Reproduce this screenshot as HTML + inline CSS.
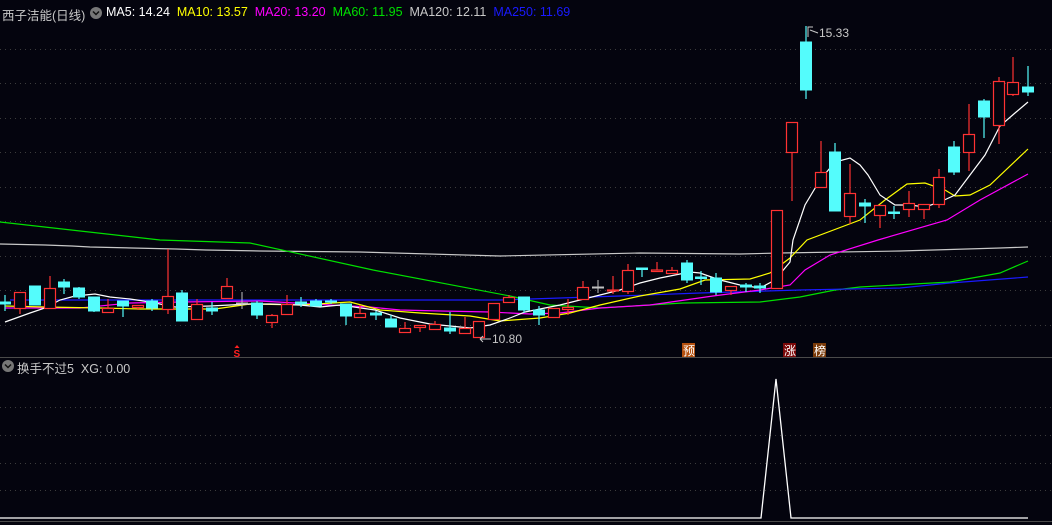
<!DOCTYPE html>
<html><head><meta charset="utf-8"><style>
html,body{margin:0;padding:0;background:#04040e;}
body{width:1052px;height:525px;overflow:hidden;position:relative;font-family:"Liberation Sans","Noto Sans CJK SC",sans-serif;}
.t{position:absolute;font-size:12.5px;white-space:nowrap;}
svg{position:absolute;left:0;top:0}
.r line,.r rect{stroke:#ff3232;stroke-width:1.2}
.r rect{fill:#04040e}
.c line{stroke:#54fcfc;stroke-width:1.2}
.c rect{fill:#54fcfc;stroke:#54fcfc;stroke-width:1}
.g line,.g rect{stroke:#c0c0c0;fill:#c0c0c0}
.ma{fill:none;stroke-width:1.2}
.grid{stroke:#3c3c3c;stroke-dasharray:1 4;stroke-width:1}
</style></head><body>
<svg width="1052" height="525" xmlns="http://www.w3.org/2000/svg">
<g class="grid">
<line x1="0" y1="49.5" x2="1052" y2="49.5"/><line x1="0" y1="83.5" x2="1052" y2="83.5"/><line x1="0" y1="118.5" x2="1052" y2="118.5"/><line x1="0" y1="152.5" x2="1052" y2="152.5"/><line x1="0" y1="187.5" x2="1052" y2="187.5"/><line x1="0" y1="221.5" x2="1052" y2="221.5"/><line x1="0" y1="256.5" x2="1052" y2="256.5"/><line x1="0" y1="290.5" x2="1052" y2="290.5"/><line x1="0" y1="325.5" x2="1052" y2="325.5"/>
<line x1="0" y1="407.5" x2="1052" y2="407.5"/><line x1="0" y1="435.5" x2="1052" y2="435.5"/><line x1="0" y1="463.5" x2="1052" y2="463.5"/><line x1="0" y1="490.5" x2="1052" y2="490.5"/>
</g>
<line x1="0" y1="357.5" x2="1052" y2="357.5" stroke="#4a4a4a"/>
<line x1="0" y1="521.5" x2="1052" y2="521.5" stroke="#4a4a4a"/>
<!-- MA lines -->
<polyline class="ma" stroke="#c8c8c8" points="0,244 45,245 72,246 90,247 132,248 176,249 206,250 260,251 360,252 500,256 640,253 740,254 780,253 900,251 1000,248 1028,247"/>
<polyline class="ma" stroke="#00e000" points="0,222 160,240 250,243 373,270 510,296 550,305 600,308 683,303 760,302 800,297 835,290 860,287 950,282 1000,273 1028,261"/>
<polyline class="ma" stroke="#1a1aff" points="10,300 500,300 620,296 700,293 800,290 900,288 950,283 1028,277"/>
<polyline class="ma" stroke="#ff00ff" points="5,308 80,308 130,303 180,302 260,301 330,305 370,307 400,310 440,311 490,312 530,314 560,313 600,308 650,305 713,296 760,290 790,285 805,270 830,255 878,240 947,220 980,200 1028,174"/>
<polyline class="ma" stroke="#ffff00" points="5,306 45,307 100,308 140,309 215,309 250,304 300,305 350,302 380,310 420,313 470,316 500,321 540,318 570,313 600,305 640,296 680,289 705,280 750,279 770,273 790,258 807,240 860,220 885,200 907,184 925,183 945,190 955,196 970,195 990,185 1028,149"/>
<polyline class="ma" stroke="#ffffff" points="5,322 30,313 45,308 60,300 75,296 95,294 110,297 130,299 150,302 175,307 210,306 250,304 270,304 300,305 320,307 340,305 375,310 400,318 430,324 470,328 490,325 510,318 525,312 560,305 600,295 620,290 640,283 660,278 680,274 690,272 700,273 720,280 740,285 760,288 775,280 790,262 793,240 805,205 820,180 835,162 850,158 860,165 868,175 880,195 895,205 910,205 925,207 940,202 955,195 970,175 985,155 1000,126 1015,113 1028,102"/>
<!-- candles -->
<g class="c"><line x1="5" y1="295" x2="5" y2="311"/><rect x="-0.5" y="302" width="11" height="2"/></g>
<g class="r"><line x1="20" y1="292" x2="20" y2="314"/><rect x="14.5" y="292.5" width="11" height="16"/></g>
<g class="c"><line x1="35" y1="286" x2="35" y2="305"/><rect x="29.5" y="286" width="11" height="19"/></g>
<g class="r"><line x1="50" y1="276" x2="50" y2="308"/><rect x="44.5" y="288.5" width="11" height="20"/></g>
<g class="c"><line x1="64" y1="279" x2="64" y2="294"/><rect x="58.5" y="282" width="11" height="5"/></g>
<g class="c"><line x1="79" y1="287" x2="79" y2="299"/><rect x="73.5" y="288" width="11" height="9"/></g>
<g class="c"><line x1="94" y1="297" x2="94" y2="312"/><rect x="88.5" y="297" width="11" height="14"/></g>
<g class="r"><line x1="108" y1="299" x2="108" y2="312"/><rect x="102.5" y="308.5" width="11" height="4"/></g>
<g class="c"><line x1="123" y1="301" x2="123" y2="317"/><rect x="117.5" y="301" width="11" height="5"/></g>
<g class="r"><line x1="138" y1="305" x2="138" y2="310"/><rect x="132.5" y="305.5" width="11" height="2"/></g>
<g class="c"><line x1="152" y1="299" x2="152" y2="311"/><rect x="146.5" y="301" width="11" height="7"/></g>
<g class="r"><line x1="168" y1="249" x2="168" y2="314"/><rect x="162.5" y="296.5" width="11" height="13"/></g>
<g class="c"><line x1="182" y1="290" x2="182" y2="321"/><rect x="176.5" y="293" width="11" height="28"/></g>
<g class="r"><line x1="197" y1="299" x2="197" y2="319"/><rect x="191.5" y="304.5" width="11" height="15"/></g>
<g class="c"><line x1="212" y1="302" x2="212" y2="315"/><rect x="206.5" y="308" width="11" height="3"/></g>
<g class="r"><line x1="227" y1="278" x2="227" y2="298"/><rect x="221.5" y="286.5" width="11" height="12"/></g>
<g class="g"><line x1="242" y1="292" x2="242" y2="309"/><rect x="236.5" y="303" width="11" height="1"/></g>
<g class="c"><line x1="257" y1="301" x2="257" y2="319"/><rect x="251.5" y="303" width="11" height="12"/></g>
<g class="r"><line x1="272" y1="314" x2="272" y2="328"/><rect x="266.5" y="315.5" width="11" height="7"/></g>
<g class="r"><line x1="287" y1="295" x2="287" y2="314"/><rect x="281.5" y="304.5" width="11" height="10"/></g>
<g class="c"><line x1="301" y1="297" x2="301" y2="307"/><rect x="295.5" y="302" width="11" height="2"/></g>
<g class="c"><line x1="316" y1="299" x2="316" y2="306"/><rect x="310.5" y="301" width="11" height="5"/></g>
<g class="c"><line x1="331" y1="299" x2="331" y2="304"/><rect x="325.5" y="301" width="11" height="1"/></g>
<g class="c"><line x1="346" y1="304" x2="346" y2="325"/><rect x="340.5" y="304" width="11" height="12"/></g>
<g class="r"><line x1="360" y1="305" x2="360" y2="317"/><rect x="354.5" y="313.5" width="11" height="4"/></g>
<g class="c"><line x1="376" y1="311" x2="376" y2="320"/><rect x="370.5" y="313" width="11" height="2"/></g>
<g class="c"><line x1="391" y1="315" x2="391" y2="327"/><rect x="385.5" y="319" width="11" height="8"/></g>
<g class="r"><line x1="405" y1="322" x2="405" y2="332"/><rect x="399.5" y="328.5" width="11" height="4"/></g>
<g class="r"><line x1="420" y1="325" x2="420" y2="332"/><rect x="414.5" y="325.5" width="11" height="2"/></g>
<g class="r"><line x1="435" y1="321" x2="435" y2="329"/><rect x="429.5" y="324.5" width="11" height="5"/></g>
<g class="c"><line x1="450" y1="312" x2="450" y2="334"/><rect x="444.5" y="328" width="11" height="3"/></g>
<g class="r"><line x1="465" y1="317" x2="465" y2="333"/><rect x="459.5" y="328.5" width="11" height="5"/></g>
<g class="r"><line x1="479" y1="321" x2="479" y2="337"/><rect x="473.5" y="321.5" width="11" height="16"/></g>
<g class="r"><line x1="494" y1="303" x2="494" y2="319"/><rect x="488.5" y="303.5" width="11" height="16"/></g>
<g class="r"><line x1="509" y1="295" x2="509" y2="303"/><rect x="503.5" y="297.5" width="11" height="5"/></g>
<g class="c"><line x1="524" y1="297" x2="524" y2="313"/><rect x="518.5" y="297" width="11" height="13"/></g>
<g class="c"><line x1="539" y1="306" x2="539" y2="325"/><rect x="533.5" y="310" width="11" height="5"/></g>
<g class="r"><line x1="554" y1="308" x2="554" y2="317"/><rect x="548.5" y="308.5" width="11" height="9"/></g>
<g class="r"><line x1="568" y1="299" x2="568" y2="315"/><rect x="562.5" y="307.5" width="11" height="2"/></g>
<g class="r"><line x1="583" y1="281" x2="583" y2="299"/><rect x="577.5" y="287.5" width="11" height="12"/></g>
<g class="g"><line x1="598" y1="280" x2="598" y2="293"/><rect x="592.5" y="287" width="11" height="1"/></g>
<g class="r"><line x1="613" y1="276" x2="613" y2="294"/><rect x="607.5" y="290" width="11" height="1"/></g>
<g class="r"><line x1="628" y1="264" x2="628" y2="294"/><rect x="622.5" y="270.5" width="11" height="21"/></g>
<g class="c"><line x1="642" y1="268" x2="642" y2="277"/><rect x="636.5" y="268" width="11" height="1.5"/></g>
<g class="r"><line x1="657" y1="262" x2="657" y2="271"/><rect x="651.5" y="270" width="11" height="1.5"/></g>
<g class="r"><line x1="672" y1="267" x2="672" y2="273"/><rect x="666.5" y="270.5" width="11" height="3"/></g>
<g class="c"><line x1="687" y1="260" x2="687" y2="283"/><rect x="681.5" y="263" width="11" height="17"/></g>
<g class="c"><line x1="701" y1="271" x2="701" y2="285"/><rect x="695.5" y="277" width="11" height="1.5"/></g>
<g class="c"><line x1="716" y1="273" x2="716" y2="295"/><rect x="710.5" y="278" width="11" height="14"/></g>
<g class="r"><line x1="731" y1="286" x2="731" y2="295"/><rect x="725.5" y="286.5" width="11" height="4"/></g>
<g class="c"><line x1="746" y1="283" x2="746" y2="292"/><rect x="740.5" y="285" width="11" height="2"/></g>
<g class="c"><line x1="760" y1="283" x2="760" y2="293"/><rect x="754.5" y="286" width="11" height="2"/></g>
<g class="r"><line x1="777" y1="210" x2="777" y2="288"/><rect x="771.5" y="210.5" width="11" height="78"/></g>
<g class="r"><line x1="792" y1="122" x2="792" y2="201"/><rect x="786.5" y="122.5" width="11" height="30"/></g>
<g class="c"><line x1="806" y1="26" x2="806" y2="99"/><rect x="800.5" y="42" width="11" height="48"/></g>
<g class="r"><line x1="821" y1="141" x2="821" y2="187"/><rect x="815.5" y="172.5" width="11" height="15"/></g>
<g class="c"><line x1="835" y1="143" x2="835" y2="211"/><rect x="829.5" y="152" width="11" height="59"/></g>
<g class="r"><line x1="850" y1="164" x2="850" y2="224"/><rect x="844.5" y="193.5" width="11" height="23"/></g>
<g class="c"><line x1="865" y1="199" x2="865" y2="223"/><rect x="859.5" y="203" width="11" height="3"/></g>
<g class="r"><line x1="880" y1="205" x2="880" y2="228"/><rect x="874.5" y="205.5" width="11" height="10"/></g>
<g class="c"><line x1="894" y1="206" x2="894" y2="219"/><rect x="888.5" y="212" width="11" height="1.5"/></g>
<g class="r"><line x1="909" y1="191" x2="909" y2="217"/><rect x="903.5" y="203.5" width="11" height="6"/></g>
<g class="r"><line x1="924" y1="204" x2="924" y2="219"/><rect x="918.5" y="204.5" width="11" height="5"/></g>
<g class="r"><line x1="939" y1="169" x2="939" y2="208"/><rect x="933.5" y="177.5" width="11" height="27"/></g>
<g class="c"><line x1="954" y1="141" x2="954" y2="175"/><rect x="948.5" y="147" width="11" height="25"/></g>
<g class="r"><line x1="969" y1="104" x2="969" y2="171"/><rect x="963.5" y="134.5" width="11" height="18"/></g>
<g class="c"><line x1="984" y1="99" x2="984" y2="138"/><rect x="978.5" y="101" width="11" height="16"/></g>
<g class="r"><line x1="999" y1="77" x2="999" y2="144"/><rect x="993.5" y="81.5" width="11" height="44"/></g>
<g class="r"><line x1="1013" y1="57" x2="1013" y2="96"/><rect x="1007.5" y="82.5" width="11" height="12"/></g>
<g class="c"><line x1="1028" y1="66" x2="1028" y2="96"/><rect x="1022.5" y="87" width="11" height="5"/></g>
<!-- annotations -->
<path d="M808 37 L808 27 L813 27 M810 30 L818 33" stroke="#c8c8c8" fill="none" stroke-width="1"/>
<text x="819" y="37" fill="#c8c8c8" font-size="12" font-family="Liberation Sans,sans-serif">15.33</text>
<path d="M480 339 L491 339 M480 339 L483 336 M480 339 L483 342" stroke="#c8c8c8" fill="none" stroke-width="1"/>
<text x="492" y="343" fill="#c8c8c8" font-size="12" font-family="Liberation Sans,sans-serif">10.80</text>
<path d="M237 345 L239.5 348 L234.5 348 Z" fill="#ff2020"/>
<text x="233.5" y="357" fill="#ff2020" font-size="10" font-weight="bold" font-family="Liberation Sans,sans-serif">S</text>
<rect x="682" y="343" width="13" height="14" fill="#b4500f"/>
<text x="683" y="355" fill="#fff" font-size="12" font-family="Noto Sans CJK SC,sans-serif">预</text>
<rect x="783" y="343" width="13" height="14" fill="#7a0808"/>
<text x="784" y="355" fill="#fff" font-size="12" font-family="Noto Sans CJK SC,sans-serif">涨</text>
<rect x="813" y="343" width="13" height="14" fill="#7a3a08"/>
<text x="814" y="355" fill="#fff" font-size="12" font-family="Noto Sans CJK SC,sans-serif">榜</text>
<!-- lower panel -->
<polyline fill="none" stroke="#fff" stroke-width="1.3" points="0,518 761,518 776,379 791,518 1028,518"/>
<!-- icons -->
<circle cx="96" cy="13" r="6" fill="#777"/><path d="M93 11.5 L96 14.5 L99 11.5" stroke="#111" fill="none" stroke-width="1.5"/>
<circle cx="8" cy="366" r="6" fill="#777"/><path d="M5 364.5 L8 367.5 L11 364.5" stroke="#111" fill="none" stroke-width="1.5"/>
</svg>
<div class="t" style="left:2px;top:5px;color:#c8c8c8">西子洁能(日线)</div>
<div class="t" style="left:106px;top:5px"><span style="color:#fff">MA5: 14.24</span>&nbsp; <span style="color:#ffff00">MA10: 13.57</span>&nbsp; <span style="color:#ff00ff">MA20: 13.20</span>&nbsp; <span style="color:#00e000">MA60: 11.95</span>&nbsp; <span style="color:#c8c8c8">MA120: 12.11</span>&nbsp; <span style="color:#1a1aff">MA250: 11.69</span></div>
<div class="t" style="left:17px;top:358px;color:#c8c8c8">换手不过5&nbsp; XG: 0.00</div>
</body></html>
